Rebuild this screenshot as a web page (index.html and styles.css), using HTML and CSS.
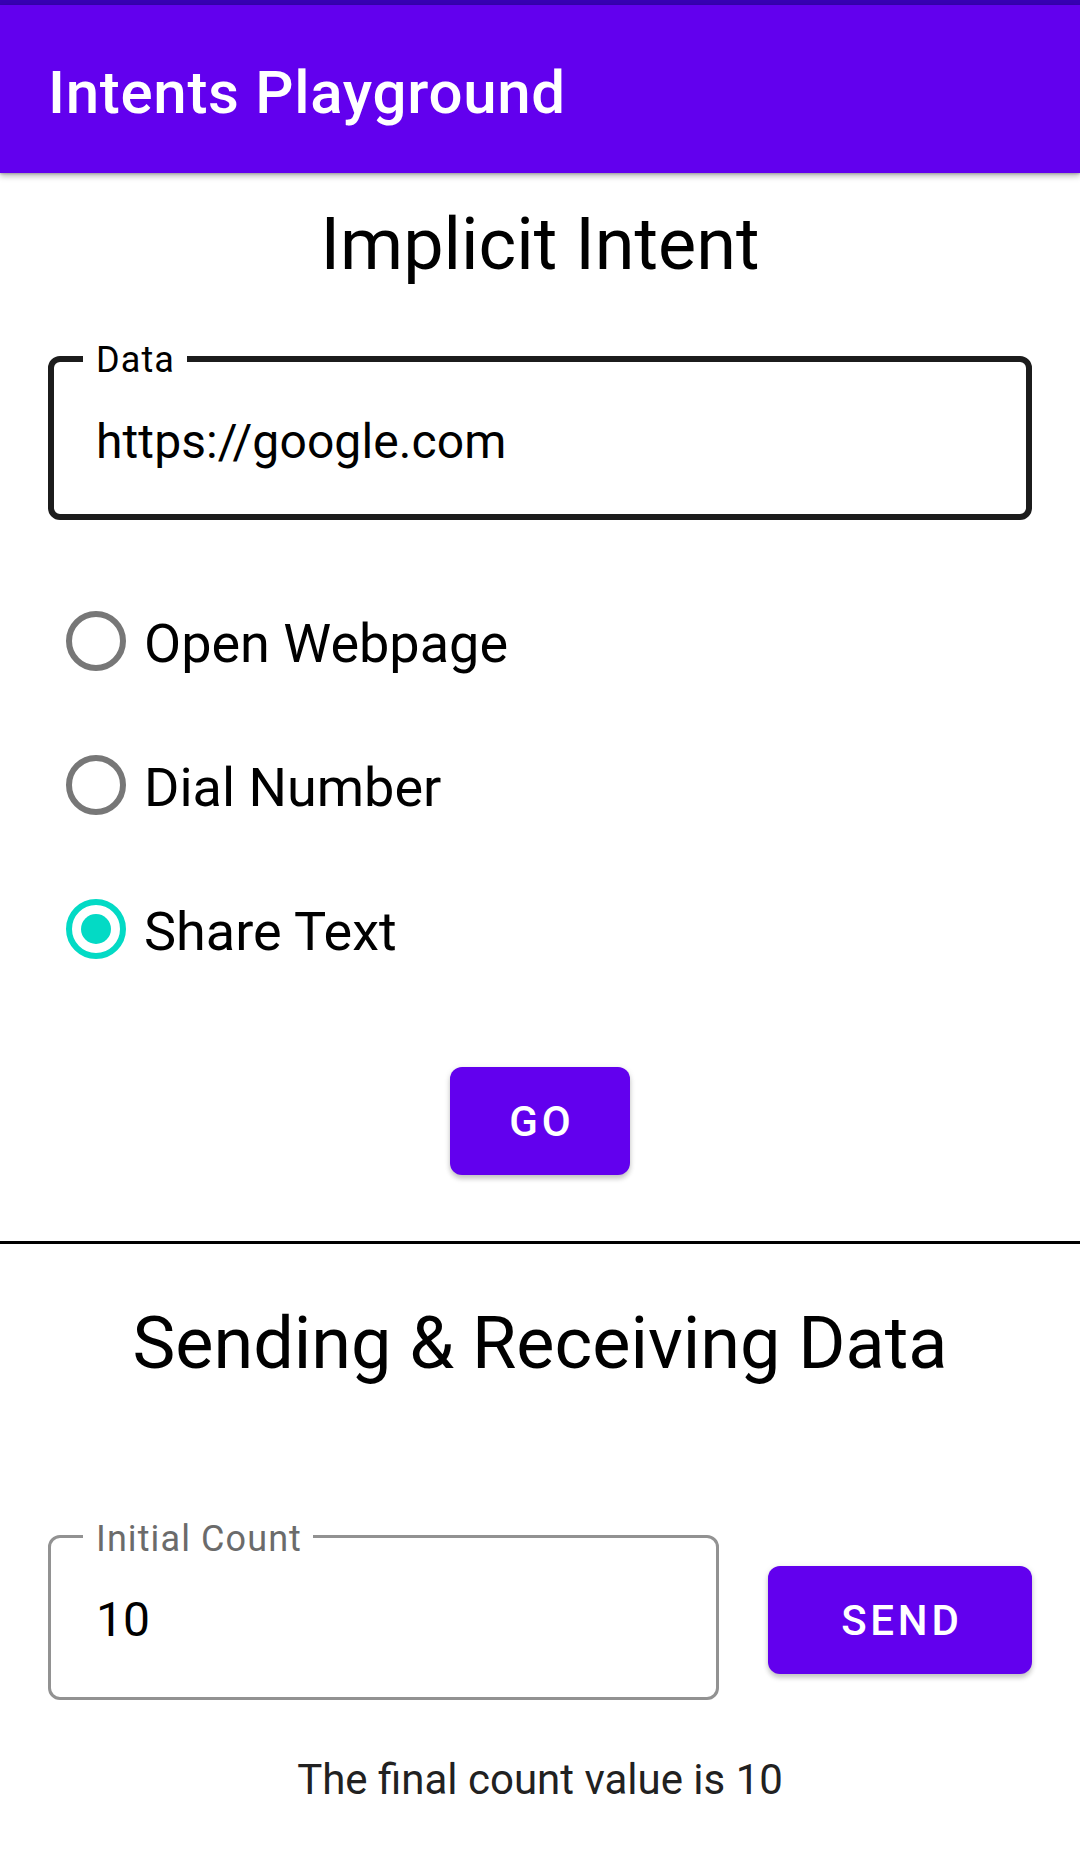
FILE: index.html
```html
<!DOCTYPE html>
<html lang="en">
<head>
<meta charset="utf-8">
<title>Intents Playground</title>
<link rel="stylesheet" href="styles.css">
</head>
<body>
<div class="status"></div>
<header class="appbar"><h1 class="appbar-title">Intents Playground</h1></header>
<main class="content">
  <h2 class="section-title first">Implicit Intent</h2>
  <div class="field field-focused">
    <span class="field-label">Data</span>
    <span class="field-value">https://google.com</span>
  </div>
  <div class="radio-group">
    <div class="radio-row"><span class="radio"></span><span class="radio-text">Open Webpage</span></div>
    <div class="radio-row"><span class="radio"></span><span class="radio-text">Dial Number</span></div>
    <div class="radio-row"><span class="radio radio-checked"></span><span class="radio-text">Share Text</span></div>
  </div>
  <div class="btn-wrap"><button class="btn btn-go">GO</button></div>
  <hr class="divider">
  <h2 class="section-title second">Sending &amp; Receiving Data</h2>
  <div class="count-row">
    <div class="field field-idle">
      <span class="field-label label-idle">Initial Count</span>
      <span class="field-value">10</span>
    </div>
    <button class="btn btn-send">SEND</button>
  </div>
  <p class="result">The final count value is 10</p>
</main>
</body>
</html>
```
FILE: styles.css
```css
* { box-sizing: border-box; }
html, body {
  margin: 0;
  padding: 0;
  background: #ffffff;
  font-family: Roboto, "Noto Sans", "Liberation Sans", sans-serif;
  width: 1080px;
  height: 1854px;
  overflow: hidden;
}
.status {
  height: 5px;
  background: #3700b3;
}
.appbar {
  height: 168px;
  background: #6200ee;
  display: flex;
  align-items: center;
  padding: 7px 0 0 48px;
  box-shadow: 0 3px 6px rgba(0,0,0,0.28), 0 1px 2px rgba(0,0,0,0.2);
  position: relative;
  z-index: 1;
}
.appbar-title {
  margin: 0;
  color: #ffffff;
  font-size: 60px;
  font-weight: 500;
  letter-spacing: 0.7px;
  line-height: 70px;
}
.content {
  display: flex;
  flex-direction: column;
}
.section-title {
  margin: 0;
  text-align: center;
  font-size: 72px;
  font-weight: 400;
  line-height: 84px;
  color: #000000;
}
.section-title.first { margin-top: 30px; }
.section-title.second { margin-top: 58px; }
.field {
  position: relative;
  height: 164px;
  border-radius: 12px;
  display: flex;
  align-items: center;
}
.field-focused {
  margin: 69px 48px 0 48px;
  border: 6px solid #1c1c1c;
  padding-left: 42px;
}
.field-focused .field-value { padding-top: 8px; }
.field-idle {
  flex: 1;
  height: 165px;
  border: 3px solid #929292;
  padding-left: 45px;
}
.field-label {
  position: absolute;
  left: 29px;
  top: -20px;
  padding: 0 12px 0 13px;
  background: #ffffff;
  font-size: 36px;
  line-height: 36px;
  color: #000000;
  letter-spacing: 1.1px;
}
.label-idle {
  left: 32px;
  top: -17px;
  color: #6b6b6b;
  padding: 0 11px 0 13px;
}
.field-value {
  font-size: 48px;
  line-height: 56px;
  color: #000000;
  letter-spacing: 0.1px;
}
.field-idle .field-value { padding-top: 5px; }
.radio-group {
  margin-top: 49px;
  padding: 0 48px;
  display: flex;
  flex-direction: column;
}
.radio-row {
  height: 144px;
  display: flex;
  align-items: center;
}
.radio {
  width: 60px;
  height: 60px;
  margin-left: 18px;
  border: 6px solid #777777;
  border-radius: 50%;
  display: flex;
  align-items: center;
  justify-content: center;
  flex: none;
}
.radio-checked {
  border-color: #03dac5;
}
.radio-checked::after {
  content: "";
  width: 30px;
  height: 30px;
  border-radius: 50%;
  background: #03dac5;
}
.radio-text {
  margin-left: 18px;
  padding-top: 4px;
  font-size: 54px;
  line-height: 63px;
  color: #000000;
}
.btn-wrap {
  display: flex;
  justify-content: center;
  margin-top: 66px;
}
.btn {
  border: none;
  margin: 0;
  padding: 0;
  height: 108px;
  border-radius: 12px;
  background: #6200ee;
  color: #ffffff;
  font-family: Roboto, "Noto Sans", "Liberation Sans", sans-serif;
  font-size: 42px;
  font-weight: 500;
  letter-spacing: 3.75px;
  text-indent: 3.75px;
  box-shadow: 0 4px 5px rgba(0,0,0,0.18), 0 1px 6px rgba(0,0,0,0.1);
  display: flex;
  align-items: center;
  justify-content: center;
}
.btn-go { width: 180px; }
.btn-send {
  width: 264px;
  margin-left: 49px;
  margin-top: 5px;
  flex: none;
}
.divider {
  margin: 66px 0 0 0;
  border: none;
  height: 3px;
  background: #000000;
}
.count-row {
  margin-top: 149px;
  padding: 0 48px;
  display: flex;
  align-items: center;
}
.result {
  margin: 55px 0 0 0;
  text-align: center;
  font-size: 42px;
  line-height: 49px;
  color: #212121;
}
```
